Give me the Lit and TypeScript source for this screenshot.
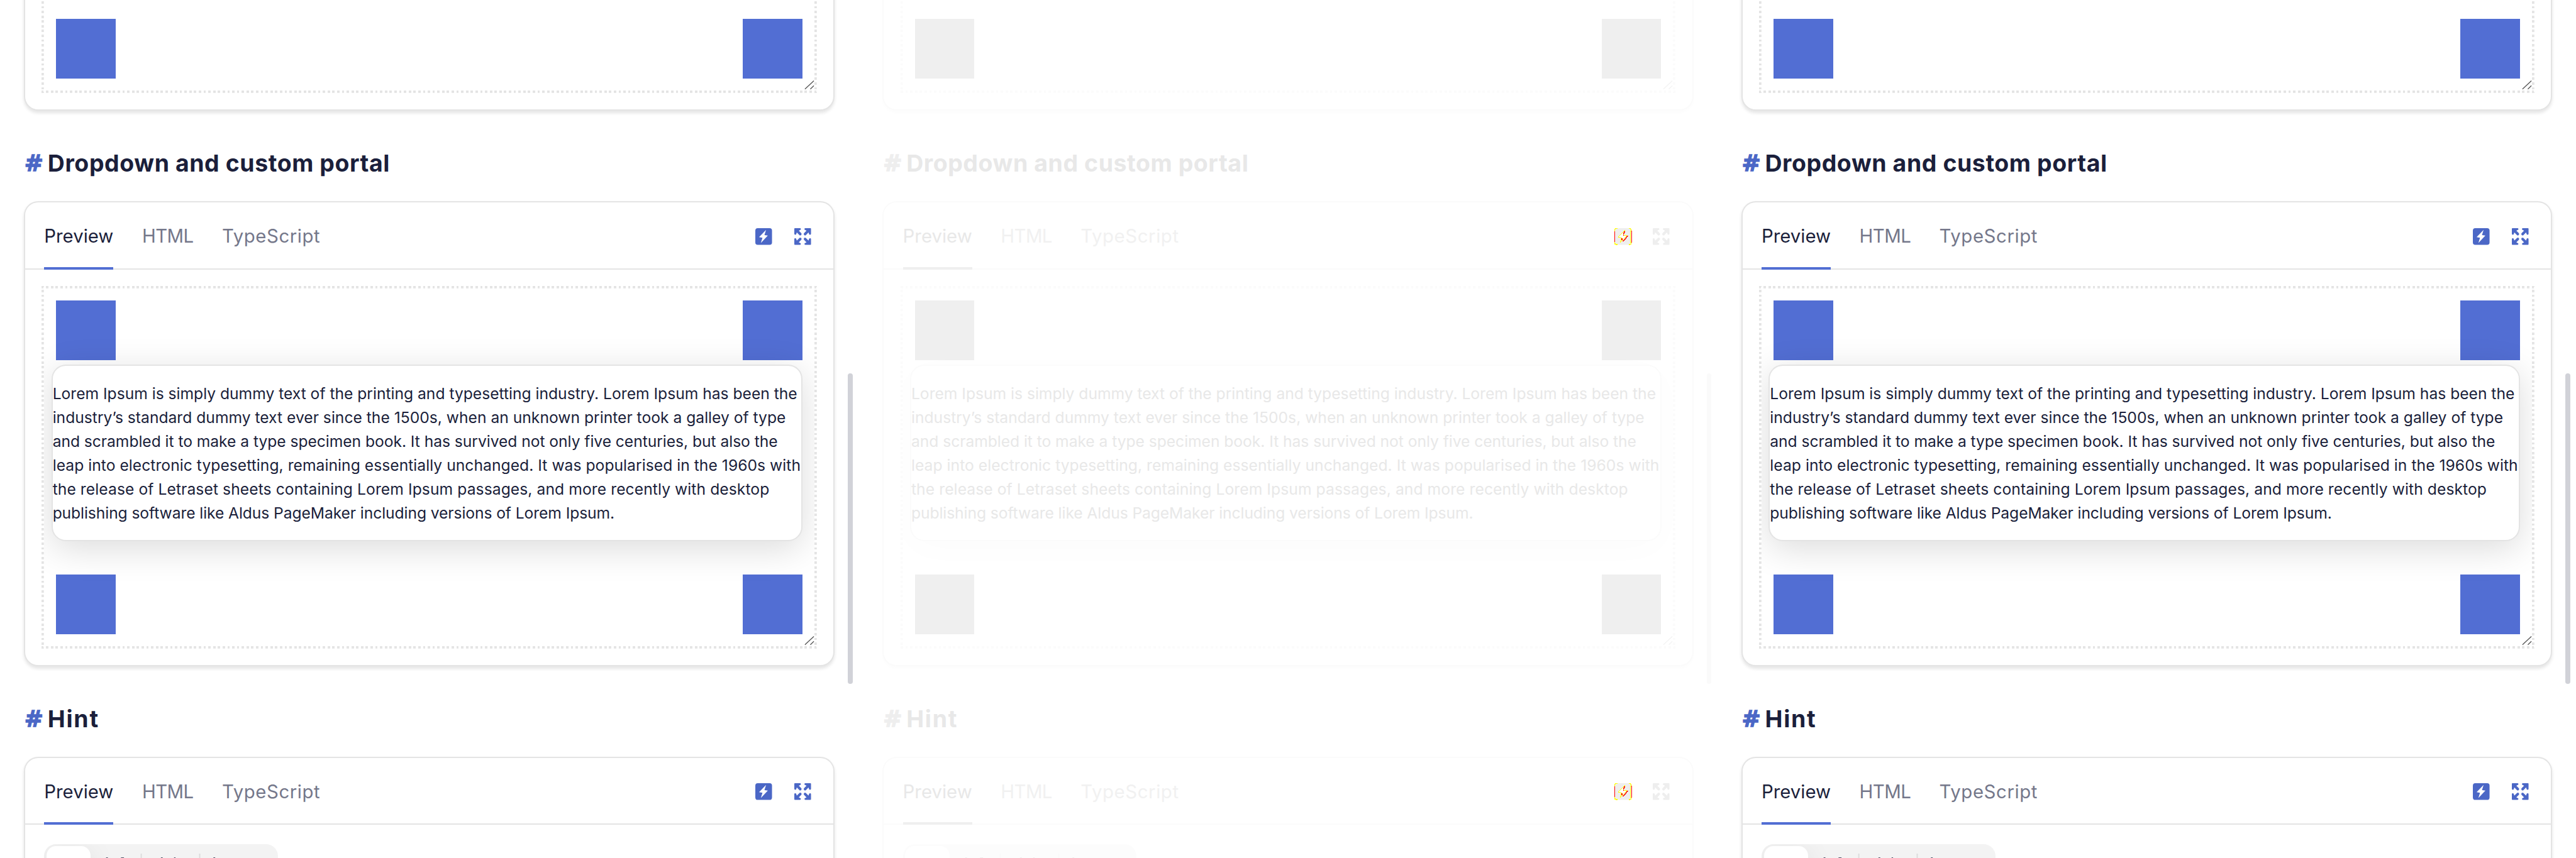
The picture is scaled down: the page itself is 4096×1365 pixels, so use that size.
import { LitElement, html, svg, css, nothing } from "lit";
import { classMap } from "lit/directives/class-map.js";
import { styleMap } from "lit/directives/style-map.js";

type Run = { text: string; track: number };

const LINES: Run[] = [
  { text: "Lorem Ipsum is simply dummy text of the printing and typesetting industry. Lorem Ipsum has been the", track: -0.015 },
  { text: "industry’s standard dummy text ever since the 1500s, when an unknown printer took a galley of type", track: 0 },
  { text: "and scrambled it to make a type specimen book. It has survived not only five centuries, but also the", track: -0.05 },
  { text: "leap into electronic typesetting, remaining essentially unchanged. It was popularised in the 1960s with", track: 0.036 },
  { text: "the release of Letraset sheets containing Lorem Ipsum passages, and more recently with desktop", track: 0.083 },
  { text: "publishing software like Aldus PageMaker including versions of Lorem Ipsum.", track: -0.095 },
];

const TABS: Run[] = [
  { text: "Preview", track: 0 },
  { text: "HTML", track: -0.6 },
  { text: "TypeScript", track: 0.6 },
];

const track = (r: Run) => styleMap({ letterSpacing: `${r.track}px` });

class DocPanel extends LitElement {
  static properties = { diff: { type: Boolean, reflect: true } };
  declare diff: boolean;

  static styles = css`
    :host {
      --text: #1b1f3b;
      --muted: #74778a;
      --accent: #526ed3;
      --link: #4b67c6;
      --line: #e4e4e4;
      --grip: #555;
      --thumb: #d1d2d8;
      --track: #f3f3f3;
      --divider: #dcdcdc;
      --card-shadow: 0 4px 6px rgba(0, 0, 0, 0.1);
      --drop-shadow: 0 12px 60px rgba(0, 0, 0, 0.14);
      --knob-shadow: 0 8px 48px rgba(0, 0, 0, 0.08);
      --hair: 2.12px;
      position: relative;
      display: block;
      width: 1440px;
      height: 1440px;
      overflow: hidden;
      padding: 0 40px;
      box-sizing: border-box;
      color: var(--text);
      font-family: Inter, "Liberation Sans", sans-serif;
    }
    :host([diff]) {
      --text: #e8e8e8;
      --muted: #f1f1f1;
      --accent: #efefef;
      --link: #eeeeee;
      --line: #fbfbfb;
      --grip: #f3f3f3;
      --thumb: #fafafa;
      --track: #fcfcfc;
      --divider: #fafafa;
      --card-shadow: 0 4px 6px rgba(0, 0, 0, 0.01);
      --drop-shadow: 0 12px 60px rgba(0, 0, 0, 0.014);
      --knob-shadow: 0 8px 48px rgba(0, 0, 0, 0.01);
    }
    * {
      box-sizing: border-box;
    }
    .card {
      height: 780px;
      border: var(--hair) solid var(--line);
      border-radius: 24px;
      box-shadow: var(--card-shadow);
      background: #fff;
    }
    .card.tail {
      height: 226px;
      margin-top: -40px;
    }
    .card.head {
      height: 300px;
    }
    .title {
      display: flex;
      align-items: center;
      height: 152px;
      padding-top: 24px;
      margin: 0;
      font-size: 39.5px;
      font-weight: 700;
      line-height: 48px;
      white-space: pre;
    }
    .hash {
      width: 40px;
      padding-left: 1px;
      color: var(--link);
      font-family: "DejaVu Sans", sans-serif;
      font-size: 38px;
      -webkit-text-stroke: 1.4px var(--link);
    }
    .bar {
      display: flex;
      height: 112px;
      padding: 0 38px 0 32px;
      border-bottom: var(--hair) solid var(--line);
    }
    .tabs {
      display: flex;
      gap: 48px;
      flex: 1;
      height: 112px;
    }
    .tab {
      display: flex;
      align-items: center;
      height: 112px;
      padding-top: 5px;
      border-bottom: 4.24px solid transparent;
      color: var(--muted);
      font-size: 31px;
      white-space: nowrap;
    }
    .tab.on {
      color: var(--text);
      border-color: var(--accent);
    }
    .tab:not(.on) {
      width: 86px;
    }
    .icons {
      display: flex;
      align-items: center;
      gap: 37px;
      padding-top: 3px;
    }
    svg {
      display: block;
      overflow: visible;
    }
    .box {
      height: 608px;
      margin: 28px 28px 0;
      padding: 4px;
      background:
        repeating-linear-gradient(to right, var(--line) 0 4px, transparent 4px 8px) top / 100% 4px no-repeat,
        repeating-linear-gradient(to right, var(--line) 0 4px, transparent 4px 8px) bottom / 100% 4px no-repeat,
        repeating-linear-gradient(to top, var(--line) 0 2px, transparent 2px 6px, var(--line) 6px 8px) left / 4px 100% no-repeat,
        repeating-linear-gradient(to top, var(--line) 0 2px, transparent 2px 6px, var(--line) 6px 8px) right / 4px 100% no-repeat;
    }
    .tail .box {
      height: 166px;
    }
    .area {
      position: relative;
      display: flex;
      flex-direction: column;
      justify-content: space-between;
      height: 100%;
      padding: 20px;
      overflow: hidden;
    }
    .tail .area {
      justify-content: flex-end;
    }
    .row {
      display: flex;
      justify-content: space-between;
    }
    .square {
      width: 100px;
      height: 100px;
      background: var(--accent);
    }
    .grip {
      position: absolute;
      right: 0;
      bottom: 0;
    }
    .drop {
      position: absolute;
      left: 12px;
      top: 128px;
      width: 1260px;
      height: 296px;
      padding: 27px 0 0;
      border: var(--hair) solid var(--line);
      border-radius: 24px;
      background: #fff;
      box-shadow: var(--drop-shadow);
      font-size: 26px;
      line-height: 40px;
      white-space: pre;
    }
    .segmented {
      display: flex;
      width: 392px;
      height: 88px;
      margin: 32px 0 0 32px;
      padding: 4px;
      border-radius: 20px;
      background: var(--track);
      overflow: hidden;
    }
    .knob {
      width: 74px;
      height: 80px;
      border-radius: 16px;
      background: #fff;
      box-shadow: var(--knob-shadow);
    }
    .segments {
      margin-top: 12px;
    }
    .thumb {
      position: absolute;
      left: 1422px;
      top: 626px;
      width: 8px;
      height: 522px;
      border-radius: 4px;
      background: var(--thumb);
    }
  `;

  private bolt() {
    const flash = "18,3 6.3,15 12,16 9.3,24.7 21,12.3 15.3,11.7";
    return html`<svg width="28" height="28" viewBox="0 0 28 28">
      <rect width="28" height="28" rx="4" fill="var(--link)" />
      <polygon points=${flash} fill="#fff" />
      ${this.diff
        ? svg`<g fill="none" stroke-width="1.05" shape-rendering="crispEdges">
          <path d="M.5 4V24M28.5 4V24" stroke="#f00" />
          <path d="M27.4 4V24" stroke="#ff0" />
          <path d="M.7 5V3Q.7.7 3 .7H5M24 .7H26Q28 .7 28 3V5M.7 23V25Q.7 27.3 3 27.3H5M24 27.3H26Q28 27.3 28 25V23" stroke="#ff0" stroke-width="1.5" />
          <polygon points=${flash} stroke="#ff0" />
          <path d="M17 5.5V7M16 7V9M15.5 11V12.5M22.5 13 14.5 22M12.5 17V20.5" stroke="#f00" stroke-width="1.5" />
        </g>`
        : nothing}
    </svg>`;
  }

  private expand() {
    const arrow =
      "M1 0H9.5Q11 0 11 1.5 11 2.6 10 3L7.5 4.2 12 8.7V10.5Q12 12 10.5 12H9L4.2 7.2 3.2 10Q2.8 11 1.5 11 0 11 0 9.5V1Q0 0 1 0Z";
    return html`<svg width="28" height="28" viewBox="0 0 28 28" fill="var(--link)">
      <path d=${arrow} />
      <path d=${arrow} transform="matrix(-1 0 0 1 28 0)" />
      <path d=${arrow} transform="matrix(1 0 0 -1 0 28)" />
      <path d=${arrow} transform="matrix(-1 0 0 -1 28 28)" />
    </svg>`;
  }

  private title(r: Run) {
    return html`<h3 class="title"><span class="hash">#</span><span style=${track(r)}>${r.text}</span></h3>`;
  }

  private bar() {
    return html`<div class="bar">
      <div class="tabs">
        ${TABS.map(
          (t, i) => html`<div class=${classMap({ tab: true, on: i === 0 })}><span style=${track(t)}>${t.text}</span></div>`
        )}
      </div>
      <div class="icons">${this.bolt()}${this.expand()}</div>
    </div>`;
  }

  private squares() {
    return html`<div class="row"><div class="square"></div><div class="square"></div></div>`;
  }

  private grip() {
    return html`<svg class="grip" width="18" height="18" viewBox="0 0 18 18" stroke="var(--grip)" stroke-width="1.4">
      <path d="M2 15.5 17 1.5M11 15.5 17 9.8" fill="none" />
    </svg>`;
  }

  render() {
    return html`
      <div class="card tail">
        <div class="box"><div class="area">${this.squares()}${this.grip()}</div></div>
      </div>
      ${this.title({ text: "Dropdown and custom portal", track: 0.6 })}
      <div class="card">
        ${this.bar()}
        <div class="box">
          <div class="area">
            ${this.squares()}${this.squares()}
            <div class="drop">${LINES.map((l) => html`<div style=${track(l)}>${l.text}</div>`)}</div>
            ${this.grip()}
          </div>
        </div>
      </div>
      ${this.title({ text: "Hint", track: 1.8 })}
      <div class="card head">
        ${this.bar()}
        <div class="segmented">
          <div class="knob"></div>
          <svg class="segments" width="310" height="60" viewBox="0 0 310 60">
            <path d="M85 0V60M183 0V60" stroke="var(--divider)" stroke-width="2" />
            <path d="M26 7.3h3M51 7.3h5M118 7.3h3M140 7.3h2.5M206 7.3h3" stroke="var(--text)" stroke-width="1.2" />
          </svg>
        </div>
      </div>
      <div class="thumb"></div>
    `;
  }
}
customElements.define("doc-panel", DocPanel);

class AppRoot extends LitElement {
  static styles = css`
    :host {
      display: block;
      overflow: hidden;
      background: #fff;
    }
    .strip {
      display: flex;
      width: 4320px;
      height: 1440px;
      zoom: 0.948148;
    }
  `;
  render() {
    return html`<div class="strip">
      <doc-panel></doc-panel>
      <doc-panel diff></doc-panel>
      <doc-panel></doc-panel>
    </div>`;
  }
}
customElements.define("app-root", AppRoot);
